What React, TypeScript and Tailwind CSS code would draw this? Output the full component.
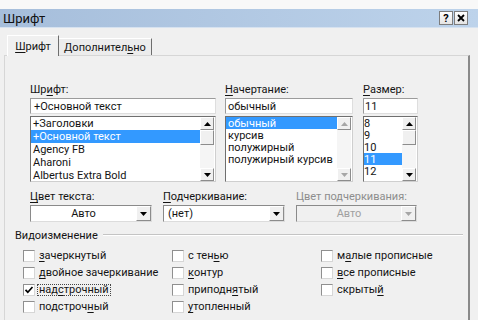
import React from "react";

const U = ({ t, i }: { t: string; i: number }) => (
  <>
    {t.slice(0, i)}
    <span className="underline underline-offset-[2px] decoration-[1px]">{t[i]}</span>
    {t.slice(i + 1)}
  </>
);

const Arrow = ({ dir, disabled }: { dir: "up" | "down"; disabled?: boolean }) => (
  <svg width="7" height="4" viewBox="0 0 7 4">
    <polygon
      points={dir === "up" ? "3.5,0 7,4 0,4" : "0,0 7,0 3.5,4"}
      fill={disabled ? "#a6a6a6" : "#000"}
    />
  </svg>
);

const Raised = ({ children, className }: { children?: React.ReactNode; className: string }) => (
  <div
    className={
      "shrink-0 flex items-center justify-center bg-[#f0f0f0] border border-t-[#ffffff] border-l-[#ffffff] border-r-[#8c8c8c] border-b-[#8c8c8c] " +
      className
    }
  >
    {children}
  </div>
);

const Scrollbar = ({ disabled, thumb }: { disabled?: boolean; thumb?: boolean }) => (
  <div className="w-[14px] h-[64px] flex flex-col bg-[#f5f5f5]">
    <Raised className="h-[13px] w-[14px]">
      <Arrow dir="up" disabled={disabled} />
    </Raised>
    {thumb && <Raised className="h-[15px] w-[14px]" />}
    <div className="flex-1" />
    <Raised className="h-[13px] w-[14px]">
      <Arrow dir="down" disabled={disabled} />
    </Raised>
  </div>
);

const TextBox = ({ value, pad }: { value: string; pad: string }) => (
  <div
    className={
      "mt-[2px] h-[16px] bg-white border border-[#9b9b9b] border-b-[#dedede] border-r-[#dedede] flex items-center " +
      pad
    }
  >
    {value}
  </div>
);

const ListBox = ({
  items,
  selected,
  rowH,
  pad,
  itemsW,
  disabled,
  thumb,
}: {
  items: string[];
  selected: number;
  rowH: string;
  pad: string;
  itemsW: string;
  disabled?: boolean;
  thumb?: boolean;
}) => (
  <div className="mt-[2px] h-[66px] bg-white border border-[#6f6f6f] border-b-[#cfcfcf] border-r-[#cfcfcf] flex overflow-hidden">
    <div className={"shrink-0 flex flex-col overflow-hidden " + itemsW}>
      {items.map((it, i) => (
        <div
          key={it}
          className={
            "shrink-0 flex items-center whitespace-nowrap " +
            rowH +
            " " +
            pad +
            (i === selected ? " bg-[#3399ff] text-white" : "")
          }
        >
          {it}
        </div>
      ))}
    </div>
    <div className="shrink-0 w-[14px] h-[64px]">
      <Scrollbar disabled={disabled} thumb={thumb} />
    </div>
  </div>
);

const Combo = ({
  value,
  center,
  disabled,
  w,
}: {
  value: string;
  center?: boolean;
  disabled?: boolean;
  w: string;
}) => (
  <div
    className={
      "mt-[2px] h-[17px] border border-[#8a8a8a] border-b-[#dcdcdc] border-r-[#dcdcdc] flex items-center " +
      w +
      (disabled ? " bg-[#f0f0f0] text-[#a0a0a0]" : " bg-white")
    }
  >
    <div className={"flex-1 " + (center ? "text-center" : "pl-[4px]")}>{value}</div>
    <Raised className="w-[15px] h-[15px]">
      <Arrow dir="down" disabled={disabled} />
    </Raised>
  </div>
);

const Check = ({
  label,
  acc,
  checked,
  focus,
}: {
  label: string;
  acc: number;
  checked?: boolean;
  focus?: boolean;
}) => (
  <div className="h-[17px] flex items-center">
    <div className="w-[12px] h-[12px] bg-white border border-[#8f8f8f] border-b-[#d6d6d6] border-r-[#d6d6d6] flex items-center justify-center">
      {checked && (
        <svg width="10" height="10" viewBox="0 0 10 10">
          <path d="M1.5 4.8 L3.8 7.2 L8.5 2" stroke="#000" strokeWidth="1.7" fill="none" />
        </svg>
      )}
    </div>
    <div
      className={
        "ml-[2px] px-[1px] h-[12px] flex items-center border " +
        (focus ? "border-dotted border-[#444]" : "border-transparent")
      }
    >
      <U t={label} i={acc} />
    </div>
  </div>
);

export default function App() {
  return (
    <div className="w-[478px] h-[320px] overflow-hidden bg-[#f0f0f0] font-['Roboto',sans-serif] text-[11px] leading-none text-[#141414]">
      <div className="h-[9px] bg-[#f8f8f8]" />
      <div className="h-[19px] flex items-center bg-gradient-to-r from-[#a6bedb] to-[#bdd3eb] border-b border-[#d6e2f0]">
        <span className="pl-[3px] text-[13px] text-[#111]">Шрифт</span>
        <div className="ml-auto mr-[10px] flex gap-[1px]">
          <div className="w-[14px] h-[14px] flex items-center justify-center bg-gradient-to-b from-[#ffffff] to-[#e4e4e4] border border-[#7d7d7d] text-[11px] font-bold text-black">
            ?
          </div>
          <div className="w-[14px] h-[14px] flex items-center justify-center bg-gradient-to-b from-[#ffffff] to-[#e4e4e4] border border-[#7d7d7d]">
            <svg width="8" height="8" viewBox="0 0 8 8">
              <path d="M1 1 L7 7 M7 1 L1 7" stroke="#000" strokeWidth="1.8" />
            </svg>
          </div>
        </div>
      </div>

      <div className="mt-[7px] ml-[7px] h-[20px] flex items-end">
        <div className="relative z-10 -mb-px h-[21px] w-[52px] bg-[#f0f0f0] border-t border-l border-[#ffffff] border-r border-r-[#6e6e6e] flex items-center justify-center">
          <U t="Шрифт" i={0} />
        </div>
        <div className="h-[17px] w-[93px] bg-[#ececec] border-t border-[#ffffff] border-r border-r-[#6e6e6e] flex items-center justify-center">
          <U t="Дополнительно" i={10} />
        </div>
      </div>

      <div className="ml-[4px] w-[466px] h-[265px] border-t border-l border-[#d6d6d6] border-r-2 border-r-[#8a8a8a] pt-[27px]">
        <div className="pl-[25px] flex">
          <div className="w-[186px]">
            <div className="h-[13px] flex items-center">
              <U t="Шрифт:" i={2} />
            </div>
            <TextBox value="+Основной текст" pad="pl-[3px]" />
            <ListBox
              items={["+Заголовки", "+Основной текст", "Agency FB", "Aharoni", "Albertus Extra Bold"]}
              selected={1}
              rowH="h-[13px]"
              pad="pl-[2px]"
              itemsW="w-[169px]"
              thumb
            />
          </div>
          <div className="ml-[9px] w-[128px]">
            <div className="h-[13px] flex items-center">
              <U t="Начертание:" i={0} />
            </div>
            <TextBox value="обычный" pad="pl-[2px]" />
            <ListBox
              items={["обычный", "курсив", "полужирный", "полужирный курсив"]}
              selected={0}
              rowH="h-[12px]"
              pad="pl-[2px]"
              itemsW="w-[111px]"
              disabled
            />
          </div>
          <div className="ml-[10px] w-[55px]">
            <div className="h-[13px] flex items-center">
              <U t="Размер:" i={0} />
            </div>
            <TextBox value="11" pad="pl-[1px]" />
            <ListBox
              items={["8", "9", "10", "11", "12"]}
              selected={3}
              rowH="h-[12px]"
              pad="pl-[0px]"
              itemsW="w-[38px]"
              thumb
            />
          </div>
        </div>

        <div className="pl-[25px] mt-[8px] flex">
          <div className="w-[122px]">
            <div className="h-[13px] flex items-center">
              <U t="Цвет текста:" i={0} />
            </div>
            <Combo value="Авто" center w="w-[122px]" />
          </div>
          <div className="ml-[11px] w-[122px]">
            <div className="h-[13px] flex items-center">
              <U t="Подчеркивание:" i={0} />
            </div>
            <Combo value="(нет)" w="w-[122px]" />
          </div>
          <div className="ml-[11px] w-[121px]">
            <div className="h-[13px] flex items-center text-[#8d8d8d]">Цвет подчеркивания:</div>
            <Combo value="Авто" center disabled w="w-[121px]" />
          </div>
        </div>

        <div className="pl-[10px] pr-[5px] mt-[7px] h-[12px] flex items-center">
          <span>Видоизменение</span>
          <div className="ml-[5px] flex-1 h-[2px] border-t border-[#c4c4c4] border-b border-b-[#ffffff]" />
        </div>

        <div className="pl-[18px] mt-[6px] flex">
          <div className="w-[149px] flex flex-col">
            <Check label="зачеркнутый" acc={0} />
            <Check label="двойное зачеркивание" acc={0} />
            <Check label="надстрочный" acc={3} checked focus />
            <Check label="подстрочный" acc={8} />
          </div>
          <div className="w-[149px] flex flex-col">
            <Check label="с тенью" acc={5} />
            <Check label="контур" acc={0} />
            <Check label="приподнятый" acc={7} />
            <Check label="утопленный" acc={0} />
          </div>
          <div className="w-[140px] flex flex-col">
            <Check label="малые прописные" acc={1} />
            <Check label="все прописные" acc={0} />
            <Check label="скрытый" acc={6} />
          </div>
        </div>
      </div>
    </div>
  );
}
